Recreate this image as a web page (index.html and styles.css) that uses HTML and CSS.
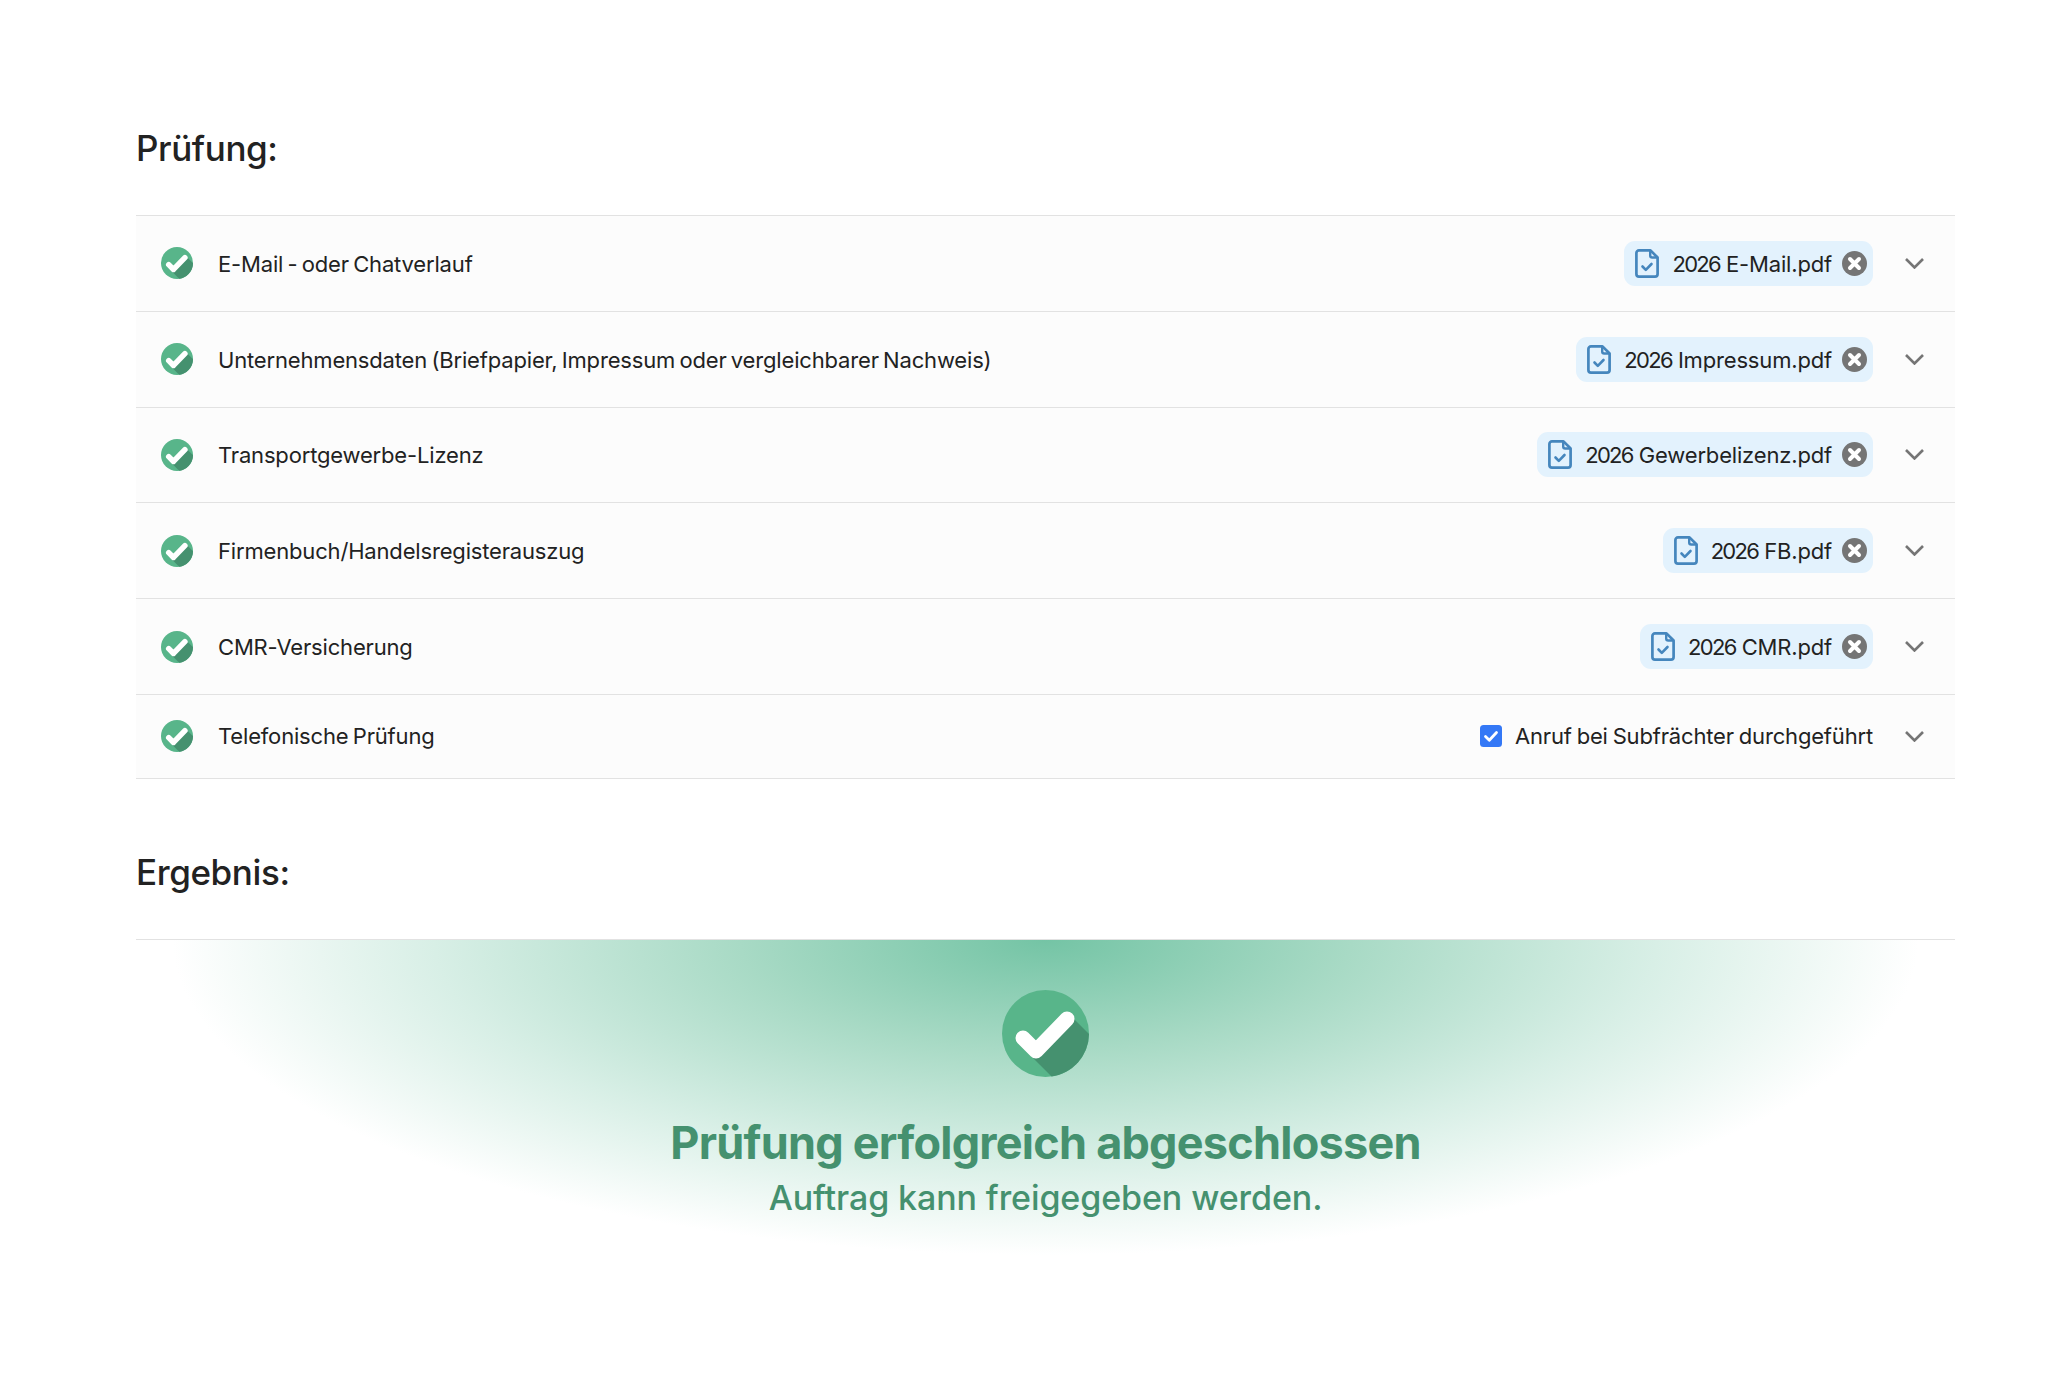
FILE: index.html
```html
<!DOCTYPE html>
<html lang="de">
<head>
<meta charset="utf-8">
<title>Prüfung</title>
<link rel="stylesheet" href="styles.css">
</head>
<body>
<svg class="sprite" aria-hidden="true">
  <symbol id="ok" viewBox="0 0 87 87">
    <circle cx="43.5" cy="43.5" r="43.5" fill="#58b58a"/>
    <path d="M71 28L87 44A43.5 43.5 0 0 1 49.6 86.6L31 68Z" fill="#45916f"/>
    <path d="M21 48L34 61L65 29" fill="none" stroke="#fff" stroke-width="15" stroke-linecap="round" stroke-linejoin="round"/>
  </symbol>
  <symbol id="file" viewBox="0 0 24 29">
    <path d="M4 1.4H15.5L22.6 8.5V25A2.6 2.6 0 0 1 20 27.6H4A2.6 2.6 0 0 1 1.4 25V4A2.6 2.6 0 0 1 4 1.4Z" fill="none" stroke="#4586bd" stroke-width="2.7" stroke-linejoin="round"/>
    <path d="M15.2 1.5V6.5A2 2 0 0 0 17.2 8.5H22.5" fill="none" stroke="#4586bd" stroke-width="2.4"/>
    <path d="M7.5 17.5L10.8 20.8L16.5 15" fill="none" stroke="#4586bd" stroke-width="2.6" stroke-linecap="round" stroke-linejoin="round"/>
  </symbol>
  <symbol id="close" viewBox="0 0 25 25">
    <circle cx="12.5" cy="12.5" r="12.5" fill="#757575"/>
    <path d="M8 8L17 17M17 8L8 17" stroke="#fff" stroke-width="4" stroke-linecap="round"/>
  </symbol>
  <symbol id="chev" viewBox="0 0 19 11">
    <path d="M1 1L9.5 9.5L18 1" fill="none" stroke="#757575" stroke-width="2.6"/>
  </symbol>
</svg>
<main class="page">
  <h2 class="heading">Prüfung:</h2>
  <div class="list">
    <div class="row">
      <svg class="status"><use href="#ok"/></svg>
      <span class="label">E-Mail - oder Chatverlauf</span>
      <span class="pill"><svg class="file"><use href="#file"/></svg><span class="pill-name"><span class="year">2026</span> E-Mail.pdf</span><svg class="remove"><use href="#close"/></svg></span>
      <svg class="chevron"><use href="#chev"/></svg>
    </div>
    <div class="row">
      <svg class="status"><use href="#ok"/></svg>
      <span class="label">Unternehmensdaten (Briefpapier, Impressum oder vergleichbarer Nachweis)</span>
      <span class="pill"><svg class="file"><use href="#file"/></svg><span class="pill-name"><span class="year">2026</span> Impressum.pdf</span><svg class="remove"><use href="#close"/></svg></span>
      <svg class="chevron"><use href="#chev"/></svg>
    </div>
    <div class="row">
      <svg class="status"><use href="#ok"/></svg>
      <span class="label">Transportgewerbe-Lizenz</span>
      <span class="pill"><svg class="file"><use href="#file"/></svg><span class="pill-name"><span class="year">2026</span> Gewerbelizenz.pdf</span><svg class="remove"><use href="#close"/></svg></span>
      <svg class="chevron"><use href="#chev"/></svg>
    </div>
    <div class="row">
      <svg class="status"><use href="#ok"/></svg>
      <span class="label">Firmenbuch/Handelsregisterauszug</span>
      <span class="pill"><svg class="file"><use href="#file"/></svg><span class="pill-name"><span class="year">2026</span> FB.pdf</span><svg class="remove"><use href="#close"/></svg></span>
      <svg class="chevron"><use href="#chev"/></svg>
    </div>
    <div class="row">
      <svg class="status"><use href="#ok"/></svg>
      <span class="label">CMR-Versicherung</span>
      <span class="pill"><svg class="file"><use href="#file"/></svg><span class="pill-name"><span class="year">2026</span> CMR.pdf</span><svg class="remove"><use href="#close"/></svg></span>
      <svg class="chevron"><use href="#chev"/></svg>
    </div>
    <div class="row row-short">
      <svg class="status"><use href="#ok"/></svg>
      <span class="label label-short">Telefonische Prüfung</span>
      <span class="confirm">
        <svg class="checkbox" viewBox="0 0 22 22"><rect width="22" height="22" rx="3.5" fill="#3478f6"/><path d="M5.5 11.5L9.3 15.2L16.5 7.5" fill="none" stroke="#fff" stroke-width="2.8" stroke-linecap="round" stroke-linejoin="round"/></svg>
        Anruf bei Subfrächter durchgeführt
      </span>
      <svg class="chevron"><use href="#chev"/></svg>
    </div>
  </div>
  <h2 class="heading heading-result">Ergebnis:</h2>
  <section class="result">
    <svg class="result-icon"><use href="#ok"/></svg>
    <h1 class="result-title">Prüfung erfolgreich abgeschlossen</h1>
    <p class="result-sub">Auftrag kann freigegeben werden.</p>
  </section>
</main>
</body>
</html>
```
FILE: styles.css
```css
* { box-sizing: border-box; }
html, body { margin: 0; background: #fff; }
body { font-family: Inter, "Noto Sans", sans-serif; color: #222; height: 1379px; overflow: hidden; }
.sprite { display: none; }
.page { padding: 125px 105px 0 136px; }
.heading { margin: 0; font-size: 35px; line-height: 46px; font-weight: 500; color: #222; letter-spacing: -0.4px; }
.list { margin-top: 44px; border-top: 1px solid #e2e2e2; }
.row { display: flex; align-items: center; height: 95.8px; padding: 0 31px 0 25px; background: #fcfcfc; border-bottom: 1px solid #e2e2e2; font-size: 22px; letter-spacing: -0.17px; word-spacing: -1.7px; }
.row-short { height: 84px; }
.status { width: 32px; height: 32px; flex: none; margin-right: 25px; }
.label { flex: 1; padding-top: 1px; }
.label-short { padding-top: 0; }
.pill { display: flex; align-items: center; height: 45px; padding: 0 6px 0 11px; background: #e3f2fd; border-radius: 11px; }
.file { width: 24px; height: 29px; margin-right: 13px; }
.pill-name { margin-right: 10px; padding-top: 1px; word-spacing: 0; }
.year { letter-spacing: -1.7px; }
.remove { width: 25px; height: 25px; }
.chevron { width: 19px; height: 11px; flex: none; margin-left: 32px; }
.confirm { display: flex; align-items: center; gap: 13px; word-spacing: -1.1px; }
.checkbox { width: 22px; height: 22px; }
.heading-result { margin-top: 70px; }
.result { margin-top: 44px; height: 340px; border-top: 1px solid #e2e2e2; text-align: center; color: #45916f; background: radial-gradient(ellipse 873px 315px at 50% 0, #74c4a5 0, #a8dac5 35%, #d8efe6 70%, #fff 100%); }
.result-icon { display: block; width: 87px; height: 87px; margin: 50px auto 0; }
.result-title { margin: 36px 0 0; font-size: 45px; line-height: 60px; font-weight: 700; letter-spacing: -0.76px; }
.result-sub { margin: 3px 0 0; font-size: 34px; line-height: 44px; font-weight: 500; letter-spacing: -0.1px; }
```
